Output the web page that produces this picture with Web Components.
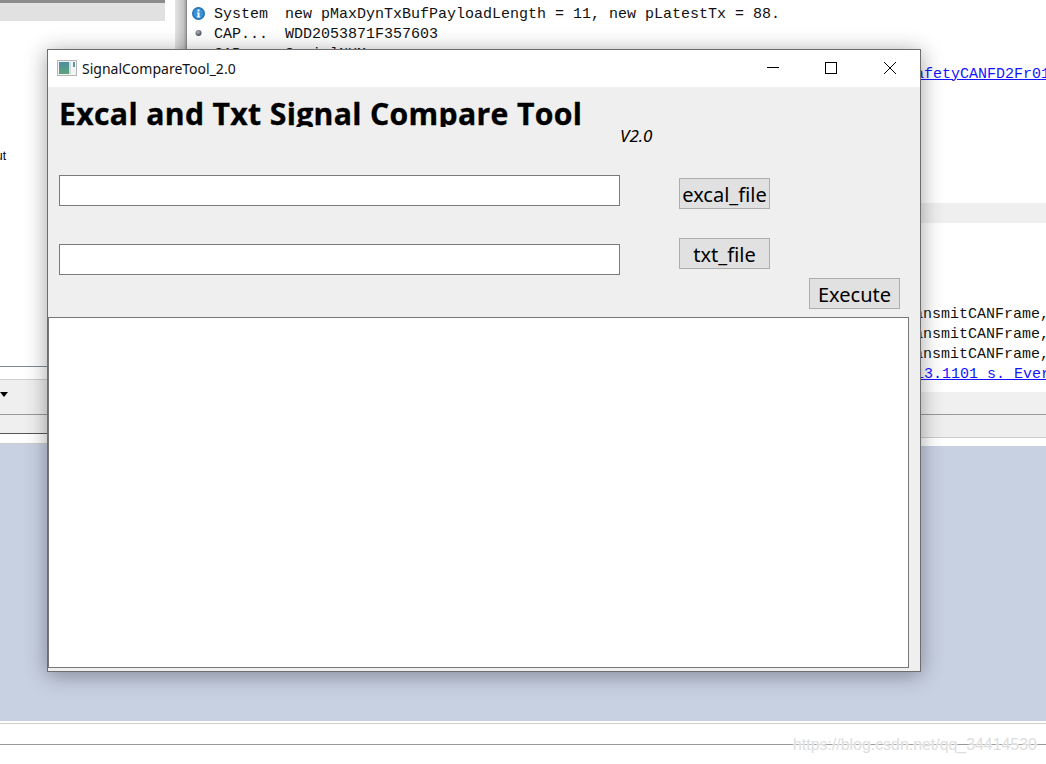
<!DOCTYPE html>
<html>
<head>
<meta charset="utf-8">
<title>SignalCompareTool_2.0</title>
<style>
  html, body { margin: 0; padding: 0; background: #fff; }
</style>
</head>
<body>
<desk-top>
  <side-pane slot="side"></side-pane>
  <log-pane slot="log">
    <log-row icon="info" kind="System" message="new pMaxDynTxBufPayloadLength = 11, new pLatestTx = 88."></log-row>
    <log-row icon="dot" kind="CAP..." message="WDD2053871F357603"></log-row>
    <log-row icon="dot" kind="CAP..." message="SerialNUM"></log-row>
    <log-row indent="701" link message="afetyCANFD2Fr01"></log-row>
    <log-row></log-row><log-row></log-row><log-row></log-row><log-row></log-row><log-row></log-row><log-row></log-row>
    <log-row shaded></log-row>
    <log-row></log-row><log-row></log-row><log-row></log-row><log-row></log-row>
    <log-row indent="700" message="ansmitCANFrame,"></log-row>
    <log-row indent="700" message="ansmitCANFrame,"></log-row>
    <log-row indent="700" message="ansmitCANFrame,"></log-row>
    <log-row indent="701" link message="13.1101 s. Ever"></log-row>
  </log-pane>
  <app-window slot="window" caption="SignalCompareTool_2.0">
    <compare-form></compare-form>
  </app-window>
</desk-top>

<script>
class DeskTop extends HTMLElement {
  constructor() {
    super();
    this.attachShadow({ mode: "open" });
  }

  connectedCallback() {
    this.shadowRoot.innerHTML = `
      <style>
        :host {
          display: block;
          position: relative;
          width: 1046px;
          height: 764px;
          overflow: hidden;
          background: #c8d1e2;
        }
        .top {
          display: flex;
          height: 446px;
        }
        .split {
          width: 21px;
          box-sizing: border-box;
          padding-left: 9px;
          background: #fff;
        }
        .split div {
          height: 100%;
          background: linear-gradient(90deg, #e4e4e4, #c4c4c4 70%, #a0a0a0 92%, #777);
        }
        .blue { height: 275px; }
        .foot {
          height: 43px;
          background: #fff;
          box-sizing: border-box;
          padding-top: 2px;
        }
        .foot div {
          height: 20px;
          border-top: 1px solid #cfcfcf;
          border-bottom: 1px solid #999;
        }
        .mark {
          position: absolute;
          left: 793px;
          top: 736px;
          font: 15.9px "Liberation Sans", Arial, sans-serif;
          color: #dedede;
          text-shadow: 0 0 2px #fff, 0 0 2px #fff;
          white-space: nowrap;
        }
      </style>
      <div class="top">
        <slot name="side"></slot>
        <div class="split"><div></div></div>
        <slot name="log"></slot>
      </div>
      <div class="blue"></div>
      <div class="foot"><div></div></div>
      <slot name="window"></slot>
      <div class="mark">https://blog.csdn.net/qq_34414530</div>
    `;
  }
}

class SidePane extends HTMLElement {
  constructor() {
    super();
    this.attachShadow({ mode: "open" });
  }

  connectedCallback() {
    this.shadowRoot.innerHTML = `
      <style>
        :host {
          display: flex;
          flex-direction: column;
          width: 166px;
          height: 444px;
          background: #fff;
          box-sizing: border-box;
          border-right: 1px solid #fff;
        }
        .head {
          height: 18px;
          background: #e1e1e1;
          border-top: 3px solid #8c8c8c;
        }
        .tree {
          height: 345px;
          box-sizing: border-box;
          padding-top: 128px;
          font: 12px "Liberation Sans", Arial, sans-serif;
          color: #000;
        }
        .tree span { display: block; margin-left: -4px; }
        .tabs {
          height: 12px;
          border-top: 1px solid #7f8791;
          border-bottom: 1px solid #cfcfcf;
        }
        .tool {
          height: 34px;
          background: #efefef;
          border-bottom: 1px solid #999;
          display: flex;
          align-items: center;
        }
        .tool svg { display: block; margin-top: -5px; }
        .bar {
          height: 18px;
          background: #efefef;
          border-bottom: 1px solid #555;
        }
        .rest {
          height: 9px;
          border-bottom: 1px solid #ccc;
        }
      </style>
      <div class="head"></div>
      <div class="tree"><span>ut</span></div>
      <div class="tabs"></div>
      <div class="tool"><svg width="8" height="5" viewBox="0 0 8 5"><path d="M0 0h8L4 5z" fill="#000"/></svg></div>
      <div class="bar"></div>
      <div class="rest"></div>
    `;
  }
}

class LogPane extends HTMLElement {
  constructor() {
    super();
    this.attachShadow({ mode: "open" });
  }

  connectedCallback() {
    this.shadowRoot.innerHTML = `
      <style>
        :host {
          display: flex;
          flex-direction: column;
          flex: 1;
          min-width: 0;
          height: 446px;
          background: #fff;
          overflow: hidden;
        }
        .rows { height: 389px; padding-top: 3px; box-sizing: content-box; }
        .tool { height: 22px; background: #f0f0f0; border-bottom: 1px solid #999; }
        .bar { height: 22px; background: #eee; border-bottom: 1px solid #ccc; }
        .rest { height: 8px; background: #fff; }
      </style>
      <div class="rows"><slot></slot></div>
      <div class="tool"></div>
      <div class="bar"></div>
      <div class="rest"></div>
    `;
  }
}

class LogRow extends HTMLElement {
  constructor() {
    super();
    this.attachShadow({ mode: "open" });
  }

  iconMarkup() {
    const icon = this.getAttribute("icon");
    if (icon === "info") {
      return `<svg width="13" height="13" viewBox="0 0 13 13">
        <circle cx="6.5" cy="6.5" r="6.5" fill="#1f6fb5"/>
        <circle cx="6.5" cy="6.5" r="5" fill="#3a93d8"/>
        <rect x="5.5" y="2.5" width="2" height="2" fill="#fff"/>
        <path d="M5 5.5h2.5v4h.8v1H4.8v-1h.8v-3H5z" fill="#fff"/>
      </svg>`;
    }
    if (icon === "dot") {
      return `<svg width="13" height="13" viewBox="0 0 13 13">
        <defs><radialGradient id="d" cx=".4" cy=".35" r=".7"><stop offset="0" stop-color="#b4b8c2"/><stop offset="1" stop-color="#3f4450"/></radialGradient></defs>
        <circle cx="6.5" cy="6" r="3" fill="url(#d)"/>
      </svg>`;
    }
    return "";
  }

  connectedCallback() {
    const indent = this.getAttribute("indent") || 0;
    const kind = this.getAttribute("kind");
    this.shadowRoot.innerHTML = `
      <style>
        :host {
          display: flex;
          align-items: center;
          height: 20px;
          font: 15px/20px "Liberation Mono", "Courier New", monospace;
          color: #111;
          white-space: pre;
          overflow: hidden;
          background: ${this.hasAttribute("shaded") ? "#efefef" : "transparent"};
        }
        .icon { flex: none; width: 27px; padding-left: 5px; box-sizing: border-box; display: flex; }
        .kind { flex: none; width: 71px; padding-top: 3px; }
        .msg { flex: none; margin-left: ${indent}px; padding-top: 3px; }
        .link { color: #1414ff; text-decoration: underline; }
      </style>
      <span class="icon">${this.iconMarkup()}</span>
      ${kind ? `<span class="kind">${kind}</span>` : ""}
      <span class="msg ${this.hasAttribute("link") ? "link" : ""}">${this.getAttribute("message") || ""}</span>
    `;
  }
}

class AppWindow extends HTMLElement {
  constructor() {
    super();
    this.attachShadow({ mode: "open" });
  }

  connectedCallback() {
    this.shadowRoot.innerHTML = `
      <style>
        :host {
          display: flex;
          flex-direction: column;
          position: absolute;
          left: 47px;
          top: 49px;
          width: 874px;
          height: 623px;
          box-sizing: border-box;
          border: 1px solid #6e6e6e;
          background: #efefef;
          box-shadow: 0 3px 20px rgba(30, 30, 40, .42);
        }
        .title {
          display: flex;
          align-items: center;
          height: 37px;
          box-sizing: border-box;
          padding-bottom: 1px;
          background: #fff;
          flex: none;
          padding-left: 9px;
        }
        .title svg.app { margin-right: 5px; }
        .caption {
          flex: 1;
          font: 14px "Noto Sans", "Open Sans", sans-serif;
          color: #111;
        }
        .ctl {
          width: 58px;
          display: flex;
          justify-content: center;
          align-items: center;
        }
        .ctl svg { display: block; }
        .end { margin-left: 1px; margin-right: 1px; }
      </style>
      <div class="title">
        <svg class="app" width="20" height="16" viewBox="0 0 20 16">
          <defs><linearGradient id="g" x1="0" y1="0" x2="0" y2="1"><stop offset="0" stop-color="#4b8ea0"/><stop offset="1" stop-color="#5ea27c"/></linearGradient></defs>
          <rect x=".5" y=".5" width="19" height="15" fill="#f4f4f4" stroke="#b5b5b5"/>
          <rect x="2" y="2" width="10" height="12" fill="url(#g)"/>
          <rect x="12" y="2" width="2" height="12" fill="#cfe0dc"/>
          <rect x="16" y="2" width="2" height="5" fill="#5e97a5"/>
        </svg>
        <span class="caption">${this.getAttribute("caption")}</span>
        <span class="ctl"><svg width="12" height="12" viewBox="0 0 12 12"><path d="M0 5.5h12" stroke="#000" fill="none"/></svg></span>
        <span class="ctl"><svg width="12" height="12" viewBox="0 0 12 12"><rect x=".5" y=".5" width="11" height="11" stroke="#000" fill="none"/></svg></span>
        <span class="ctl end"><svg width="12" height="12" viewBox="0 0 12 12"><path d="M0 0l12 12M12 0L0 12" stroke="#000" fill="none"/></svg></span>
      </div>
      <slot></slot>
    `;
  }
}

class AppButton extends HTMLElement {
  constructor() {
    super();
    this.attachShadow({ mode: "open" });
  }

  connectedCallback() {
    this.shadowRoot.innerHTML = `
      <style>
        :host {
          display: flex;
          align-items: center;
          justify-content: center;
          width: 91px;
          height: 31px;
          box-sizing: border-box;
          border: 1px solid #adadad;
          padding-top: 2px;
          background: #e1e1e1;
          font: 20px "Noto Sans", "Open Sans", sans-serif;
          color: #000;
        }
      </style>
      <slot></slot>
    `;
  }
}

class TextField extends HTMLElement {
  constructor() {
    super();
    this.attachShadow({ mode: "open" });
  }

  connectedCallback() {
    this.shadowRoot.innerHTML = `
      <style>
        :host {
          display: block;
          width: 561px;
          height: 31px;
          box-sizing: border-box;
          border: 1px solid #7a7a7a;
          background: #fff;
        }
      </style>
    `;
  }
}

class CompareForm extends HTMLElement {
  constructor() {
    super();
    this.attachShadow({ mode: "open" });
  }

  connectedCallback() {
    this.shadowRoot.innerHTML = `
      <style>
        :host {
          display: grid;
          flex: 1;
          grid-template-columns: 561px 59px 91px 39px 91px 9px;
          grid-template-rows: 88px 34px 29px 37px 3px 31px 8px 351px;
          padding-left: 11px;
        }
        .head { grid-column: 1 / 6; grid-row: 1; position: relative; }
        h1 {
          margin: 0;
          height: 40px;
          box-sizing: border-box;
          padding-top: 7px;
          overflow: hidden;
          font: 700 30.2px/39px "Open Sans", "Noto Sans", sans-serif;
          letter-spacing: .33px;
          -webkit-text-stroke: .35px #000;
          color: #000;
          white-space: nowrap;
        }
        .ver {
          position: absolute;
          left: 561px;
          top: 37px;
          font: italic 17px "Noto Sans", sans-serif;
          color: #000;
        }
        .f1 { grid-column: 1; grid-row: 2; }
        .f2 { grid-column: 1; grid-row: 4; align-self: end; }
        .b1 { grid-column: 3; grid-row: 2; align-self: end; }
        .b2 { grid-column: 3; grid-row: 4; align-self: start; }
        .b3 { grid-column: 5; grid-row: 6; }
        .out {
          grid-column: 1 / 7;
          grid-row: 8;
          margin-left: -11px;
          width: 861px;
          box-sizing: border-box;
          border: 1px solid #777;
          background: #fff;
        }
      </style>
      <div class="head"><h1>Excal and Txt Signal Compare Tool</h1><span class="ver">V2.0</span></div>
      <text-field class="f1"></text-field>
      <app-button class="b1">excal_file</app-button>
      <text-field class="f2"></text-field>
      <app-button class="b2">txt_file</app-button>
      <app-button class="b3">Execute</app-button>
      <div class="out"></div>
    `;
  }
}

customElements.define("desk-top", DeskTop);
customElements.define("side-pane", SidePane);
customElements.define("log-pane", LogPane);
customElements.define("log-row", LogRow);
customElements.define("app-window", AppWindow);
customElements.define("app-button", AppButton);
customElements.define("text-field", TextField);
customElements.define("compare-form", CompareForm);
</script>
</body>
</html>
